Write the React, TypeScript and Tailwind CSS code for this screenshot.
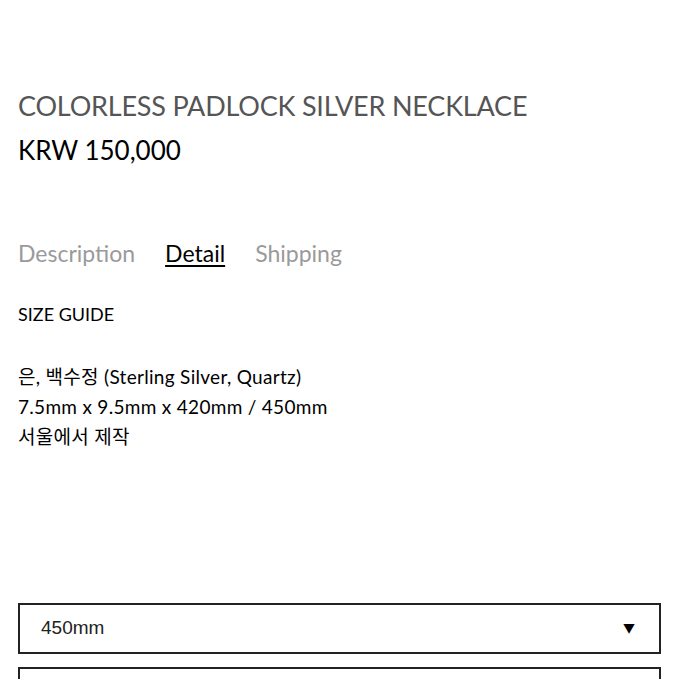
export default function App() {
  const font = { fontFamily: 'Lato, "Noto Sans CJK KR", sans-serif' };
  return (
    <div className="w-[679px] h-[679px] overflow-hidden bg-white" style={font}>
      <div className="px-[18px] pt-[89px]">
        <h1 className="text-[27px] leading-[33px] text-[#555555] font-normal tracking-[-0.2px]">
          COLORLESS PADLOCK SILVER NECKLACE
        </h1>
        <div className="mt-[12px] text-[26px] leading-[32px] text-black">KRW 150,000</div>
        <div className="mt-[73px] flex gap-[30px] text-[23px] leading-[28px]">
          <span className="text-[#9a9a9a]">Description</span>
          <span className="text-black underline underline-offset-[3px] decoration-[2px]">Detail</span>
          <span className="text-[#9a9a9a]">Shipping</span>
        </div>
        <div className="mt-[35px] text-[18px] leading-[24px] text-black">SIZE GUIDE</div>
        <div className="mt-[36px] text-[19px] leading-[30px] tracking-[0.3px] text-black">
          <div>은, 백수정 (Sterling Silver, Quartz)</div>
          <div>7.5mm x 9.5mm x 420mm / 450mm</div>
          <div>서울에서 제작</div>
        </div>
        <div className="mt-[151px] h-[51px] border-2 border-[#222222] flex items-center justify-between pl-[21px] pr-[24px]">
          <span className="text-[19px] text-[#222222]" style={{ fontFamily: '"Liberation Sans", sans-serif' }}>450mm</span>
          <span className="text-[12px] text-black">▼</span>
        </div>
        <div className="mt-[13px] h-[51px] border-2 border-[#222222]"></div>
      </div>
    </div>
  );
}
